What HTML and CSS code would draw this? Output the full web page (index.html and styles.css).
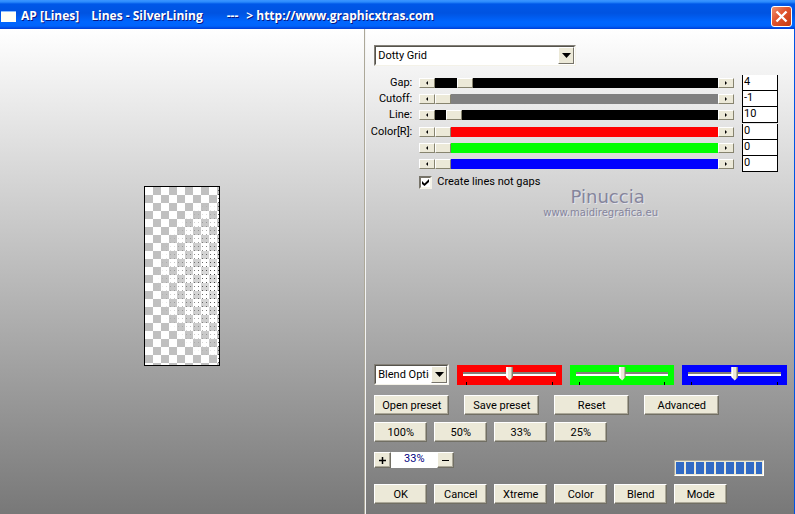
FILE: index.html
```html
<!DOCTYPE html>
<html lang="en">
<head>
    <meta charset="UTF-8">
    <meta name="viewport" content="width=device-width, initial-scale=1.0">
    <title>AP [Lines] Lines - SilverLining</title>
    <link rel="stylesheet" href="styles.css">
</head>
<body>
<div class="window">
    <header class="titlebar">
        <span class="app-icon"></span>
        <h1 class="title"><span class="t-app">AP [Lines]</span><span class="t-name">Lines - SilverLining</span><span class="t-dash">---</span><span>&gt; http://www.graphicxtras.com</span></h1>
        <button class="close" type="button" aria-label="Close">
            <svg width="13" height="13" viewBox="0 0 13 13"><path d="M1.5 1.5L11.5 11.5M11.5 1.5L1.5 11.5" stroke="#fff" stroke-width="2.4"/></svg>
        </button>
    </header>

    <main class="content">
        <section class="preview">
            <svg class="canvas" width="76" height="180" viewBox="0 0 76 180">
                <defs>
                    <pattern id="checker" x="1" y="1" width="16" height="16" patternUnits="userSpaceOnUse">
                        <rect width="16" height="16" fill="#fff"/>
                        <rect x="8" width="8" height="8" fill="#c0c0c0"/>
                        <rect y="8" width="8" height="8" fill="#c0c0c0"/>
                    </pattern>
                    <pattern id="dots" x="2" y="0" width="4" height="4" patternUnits="userSpaceOnUse">
                        <rect width="1" height="1" fill="#222"/>
                    </pattern>
                    <radialGradient id="fade" gradientUnits="userSpaceOnUse" cx="0" cy="0" r="1" gradientTransform="translate(80 94) scale(68 82)">
                        <stop offset="0" stop-color="#fff"/>
                        <stop offset="0.3" stop-color="#fff" stop-opacity="0.75"/>
                        <stop offset="1" stop-color="#fff" stop-opacity="0"/>
                    </radialGradient>
                    <mask id="fade-mask"><rect width="76" height="180" fill="url(#fade)"/></mask>
                </defs>
                <rect width="76" height="180" fill="url(#checker)"/>
                <rect width="76" height="180" fill="url(#fade)" opacity="0.5"/>
                <rect width="76" height="180" fill="url(#dots)" mask="url(#fade-mask)"/>
                <rect x="73" y="1" width="3" height="178" fill="url(#dots)" opacity="0.7"/>
                <rect x="0.5" y="0.5" width="75" height="179" fill="none" stroke="#000"/>
            </svg>
        </section>

        <section class="panel">
            <div class="combo combo-shape">
                <select aria-label="Shape"><option>Dotty Grid</option></select>
                <span class="drop"><svg width="9" height="5" viewBox="0 0 9 5"><path d="M0 0h9L4.500 5z"/></svg></span>
            </div>

            <div class="params">
                <div class="param">
                    <label for="gap">Gap:</label>
                    <div class="scroll black">
                        <button type="button" class="arrow left" aria-label="Less"></button>
                        <input type="range" id="gap" min="0" max="48" value="4">
                        <button type="button" class="arrow right" aria-label="More"></button>
                    </div>
                    <input type="text" class="value" value="4" aria-label="Gap value">
                </div>
                <div class="param">
                    <label for="cutoff">Cutoff:</label>
                    <div class="scroll gray">
                        <button type="button" class="arrow left" aria-label="Less"></button>
                        <input type="range" id="cutoff" min="-1" max="255" value="-1">
                        <button type="button" class="arrow right" aria-label="More"></button>
                    </div>
                    <input type="text" class="value" value="-1" aria-label="Cutoff value">
                </div>
                <div class="param">
                    <label for="line">Line:</label>
                    <div class="scroll black">
                        <button type="button" class="arrow left" aria-label="Less"></button>
                        <input type="range" id="line" min="0" max="240" value="10">
                        <button type="button" class="arrow right" aria-label="More"></button>
                    </div>
                    <input type="text" class="value" value="10" aria-label="Line value">
                </div>
            </div>
            <div class="params colors">
                <div class="param">
                    <label for="color-r">Color[R]:</label>
                    <div class="scroll red">
                        <button type="button" class="arrow left" aria-label="Less"></button>
                        <input type="range" id="color-r" min="0" max="255" value="0">
                        <button type="button" class="arrow right" aria-label="More"></button>
                    </div>
                    <input type="text" class="value" value="0" aria-label="Red value">
                </div>
                <div class="param">
                    <label for="color-g"></label>
                    <div class="scroll green">
                        <button type="button" class="arrow left" aria-label="Less"></button>
                        <input type="range" id="color-g" min="0" max="255" value="0" aria-label="Green">
                        <button type="button" class="arrow right" aria-label="More"></button>
                    </div>
                    <input type="text" class="value" value="0" aria-label="Green value">
                </div>
                <div class="param">
                    <label for="color-b"></label>
                    <div class="scroll blue">
                        <button type="button" class="arrow left" aria-label="Less"></button>
                        <input type="range" id="color-b" min="0" max="255" value="0" aria-label="Blue">
                        <button type="button" class="arrow right" aria-label="More"></button>
                    </div>
                    <input type="text" class="value" value="0" aria-label="Blue value">
                </div>
            </div>

            <div class="check">
                <span class="box">
                    <input type="checkbox" id="lines-not-gaps" checked>
                    <svg class="tick" width="7" height="7" viewBox="0 0 7 7"><path d="M0 2L2.500 4.500L7 0V3L2.500 7L0 5z"/></svg>
                </span>
                <label for="lines-not-gaps">Create lines not gaps</label>
            </div>

            <div class="credit">
                <p class="credit-name">Pinuccia</p>
                <p class="credit-site">www.maidiregrafica.eu</p>
            </div>

            <div class="actions">
                <div class="blend-row">
                    <div class="combo combo-blend">
                        <select aria-label="Blend options"><option>Blend Options</option></select>
                        <span class="drop"><svg width="9" height="5" viewBox="0 0 9 5"><path d="M0 0h9L4.500 5z"/></svg></span>
                    </div>
                    <div class="slider red"><input type="range" aria-label="Blend red" min="0" max="100" value="50"></div>
                    <div class="slider green"><input type="range" aria-label="Blend green" min="0" max="100" value="50"></div>
                    <div class="slider blue"><input type="range" aria-label="Blend blue" min="0" max="100" value="50"></div>
                </div>
                <div class="row row-wide">
                    <button type="button" class="btn wide">Open preset</button>
                    <button type="button" class="btn wide">Save preset</button>
                    <button type="button" class="btn wide">Reset</button>
                    <button type="button" class="btn wide">Advanced</button>
                </div>
                <div class="row">
                    <button type="button" class="btn">100%</button>
                    <button type="button" class="btn">50%</button>
                    <button type="button" class="btn">33%</button>
                    <button type="button" class="btn">25%</button>
                </div>
                <div class="zoom-row">
                    <button type="button" class="btn step" aria-label="Zoom in"><svg width="7" height="7" viewBox="0 0 7 7"><path d="M3 0h1v3h3v1H4v3H3V4H0V3h3z" stroke="#000" stroke-width="0.500"/></svg></button>
                    <output class="zoom">33%</output>
                    <button type="button" class="btn step" aria-label="Zoom out"><svg width="7" height="7" viewBox="0 0 7 7"><path d="M0 3h7v1H0z"/></svg></button>
                    <progress class="progress" max="100" value="100"></progress>
                </div>
                <div class="row">
                    <button type="button" class="btn">OK</button>
                    <button type="button" class="btn">Cancel</button>
                    <button type="button" class="btn">Xtreme</button>
                    <button type="button" class="btn">Color</button>
                    <button type="button" class="btn">Blend</button>
                    <button type="button" class="btn">Mode</button>
                </div>
            </div>
        </section>
    </main>
</div>
</body>
</html>
```

FILE: styles.css
```css
* {
    box-sizing: border-box;
}

body {
    margin: 0;
    font-family: Roboto, "Liberation Sans", Arial, sans-serif;
    font-size: 11px;
    color: #000;
}

button, input, select {
    margin: 0;
    padding: 0;
    font: inherit;
    color: inherit;
    border-radius: 0;
}

.window {
    display: flex;
    flex-direction: column;
    min-height: 100vh;
    background: #0054e3;
}

/* title bar */
.titlebar {
    display: flex;
    align-items: center;
    height: 29px;
    padding: 3px 3px 0 1px;
    background: linear-gradient(#3c96ff 0, #2a8afc 2px, #0058e8 4px, #0053e1 13px, #0066ff 22px, #0064fb 26px, #003dd7 29px);
}

.app-icon {
    width: 15px;
    height: 11px;
    margin-right: 5px;
    background: #fffff6;
    border-top: 1px solid #8cc0ff;
}

.title {
    display: flex;
    flex: 1;
    margin: 0;
    font-family: "Open Sans", "Noto Sans", sans-serif;
    font-size: 12px;
    line-height: 16px;
    font-weight: bold;
    color: #fff;
    text-shadow: 1px 1px #0a1883;
    white-space: nowrap;
}

.t-app {
    margin-right: 12px;
}

.t-name {
    margin-right: 24px;
}

.t-dash {
    margin-right: 8px;
}

.close {
    display: flex;
    align-items: center;
    justify-content: center;
    width: 21px;
    height: 21px;
    border: 1px solid #fff;
    border-radius: 3px;
    background: linear-gradient(135deg, #f0926f, #e0532d 45%, #c53a10);
}

/* content */
.content {
    display: flex;
    flex: 1;
    margin-right: 1px;
    background: linear-gradient(#fff, #787878);
}

.preview {
    display: flex;
    flex: 0 0 46%;
    align-items: center;
    justify-content: center;
    padding-top: 8px;
    border-right: 1px solid #aca899;
}

.panel {
    display: flex;
    flex: 1;
    flex-direction: column;
    padding: 16px 7px 10px 8px;
    border-left: 1px solid #f4f4f4;
}

/* drop-downs */
.combo {
    position: relative;
    height: 21px;
    border: 1px solid;
    border-color: #848078 #f4f2e8 #f4f2e8 #848078;
    background: #fff;
}

.combo select {
    width: 100%;
    height: 100%;
    padding: 0 18px 0 2px;
    border: 1px solid;
    border-color: #55534c #fff #fff #55534c;
    background: #fff;
    appearance: none;
}

.combo-shape {
    width: 202px;
}

.combo-blend {
    flex: 0 0 75px;
}

.drop {
    position: absolute;
    top: 1px;
    right: 1px;
    bottom: 1px;
    display: flex;
    align-items: center;
    justify-content: center;
    width: 16px;
    border: 1px solid;
    border-color: #fff #77746a #77746a #fff;
    background: #ece9d8;
    pointer-events: none;
}

/* parameter rows */
.params {
    margin: 9px 9px 0 -4px;
}

.colors {
    margin-top: 1px;
}

.param {
    display: flex;
    align-items: center;
    height: 16px;
}

.param label {
    width: 42px;
    margin-right: 7px;
    line-height: 14px;
    text-align: right;
    white-space: nowrap;
}

.scroll {
    display: flex;
    flex: 1;
    height: 10px;
    margin-right: 8px;
}

.black {
    background-color: #000;
}

.gray {
    background-color: #808080;
}

.red {
    background-color: #f00;
}

.green {
    background-color: #0f0;
}

.blue {
    background-color: #00f;
}

.scroll input {
    flex: 1;
    min-width: 0;
    height: 10px;
    background: none;
    appearance: none;
}

.scroll input::-webkit-slider-thumb {
    box-sizing: border-box;
    width: 16px;
    height: 10px;
    border: 1px solid;
    border-color: #fff #87846f #87846f #fff;
    background: #ece9d8;
    appearance: none;
}

.arrow {
    display: flex;
    align-items: center;
    justify-content: center;
    width: 16px;
    height: 10px;
    border: 1px solid;
    border-color: #fff #87846f #87846f #fff;
    background: #ece9d8;
}

.arrow::before {
    content: "";
    border: 2px solid transparent;
}

.arrow.left::before {
    border-left-width: 0;
    border-right-color: #000;
}

.arrow.right::before {
    border-right-width: 0;
    border-left-color: #000;
}

.value {
    width: 36px;
    height: 16px;
    padding: 0 0 2px 1px;
    border: 1px solid #000;
    border-top: none;
    background: #fff;
}

/* check box */
.check {
    display: flex;
    align-items: center;
    margin: 3px 0 0 45px;
    line-height: 14px;
}

.box {
    position: relative;
    width: 13px;
    height: 13px;
    margin-right: 5px;
}

.box input {
    display: block;
    width: 13px;
    height: 13px;
    border: 2px solid;
    border-color: #77746a #f4f2e8 #f4f2e8 #77746a;
    background: #fff;
    appearance: none;
}

.tick {
    position: absolute;
    top: 3px;
    left: 3px;
    pointer-events: none;
}

.box input:not(:checked) + .tick {
    display: none;
}

/* credit text */
.credit {
    padding-left: 40px;
    text-align: center;
    color: #85859c;
    text-shadow: 1px 1px #e4e4ec;
}

.credit p {
    margin: 0;
}

.credit .credit-name {
    padding-left: 14px;
    font-family: "DejaVu Sans", sans-serif;
    font-size: 18px;
    line-height: 16px;
}

.credit-site {
    font-family: "DejaVu Sans", sans-serif;
    font-size: 10px;
    line-height: 16px;
}

/* bottom controls */
.actions {
    margin-top: auto;
}

.blend-row {
    display: flex;
    align-items: center;
    margin-bottom: 10px;
}

.slider {
    flex: 1;
    height: 20px;
    margin-left: 8px;
    padding: 1px 6px 3px;
    background-image: linear-gradient(#000, #000), linear-gradient(#000, #000);
    background-repeat: no-repeat;
    background-size: 1px 3px;
    background-position: 9px 100%, calc(100% - 9px) 100%;
}

.slider input {
    display: block;
    width: 100%;
    height: 16px;
    background: none;
    appearance: none;
}

.slider input::-webkit-slider-runnable-track {
    height: 4px;
    background: linear-gradient(#848078 2px, #fff 2px);
}

.slider input::-webkit-slider-thumb {
    width: 7px;
    height: 14px;
    margin-top: -5px;
    background: linear-gradient(90deg, #fff 2px, #ece9d8 2px, #ece9d8 5px, #87846f 6px);
    clip-path: polygon(0 0, 100% 0, 100% 75%, 50% 100%, 0 75%);
    appearance: none;
}

.row {
    display: flex;
    gap: 7px;
    margin-top: 7px;
}

.row-wide {
    gap: 15px;
}

.btn {
    display: flex;
    align-items: center;
    justify-content: center;
    width: 53px;
    height: 20px;
    border: 1px solid;
    border-color: #fff #716f64 #716f64 #fff;
    background: #ece9d8;
    box-shadow: inset -1px -1px #aca899;
}

.wide {
    width: 75px;
}

.zoom-row {
    display: flex;
    height: 24px;
    margin: 10px 0 8px;
}

.step {
    width: 17px;
    height: 16px;
}

.zoom {
    width: 46px;
    height: 16px;
    line-height: 14px;
    text-align: center;
    color: #000080;
    background: #fff;
}

.progress {
    align-self: flex-end;
    width: 90px;
    height: 16px;
    margin-left: 220px;
    padding: 1px;
    border: 1px solid;
    border-color: #aca899 #fff #fff #aca899;
    background: #ece9d8;
    appearance: none;
}

.progress::-webkit-progress-bar {
    background: #ece9d8;
}

.progress::-webkit-progress-value {
    background: repeating-linear-gradient(90deg, #316ac5 0, #316ac5 8px, #ece9d8 8px, #ece9d8 10px);
}
```
